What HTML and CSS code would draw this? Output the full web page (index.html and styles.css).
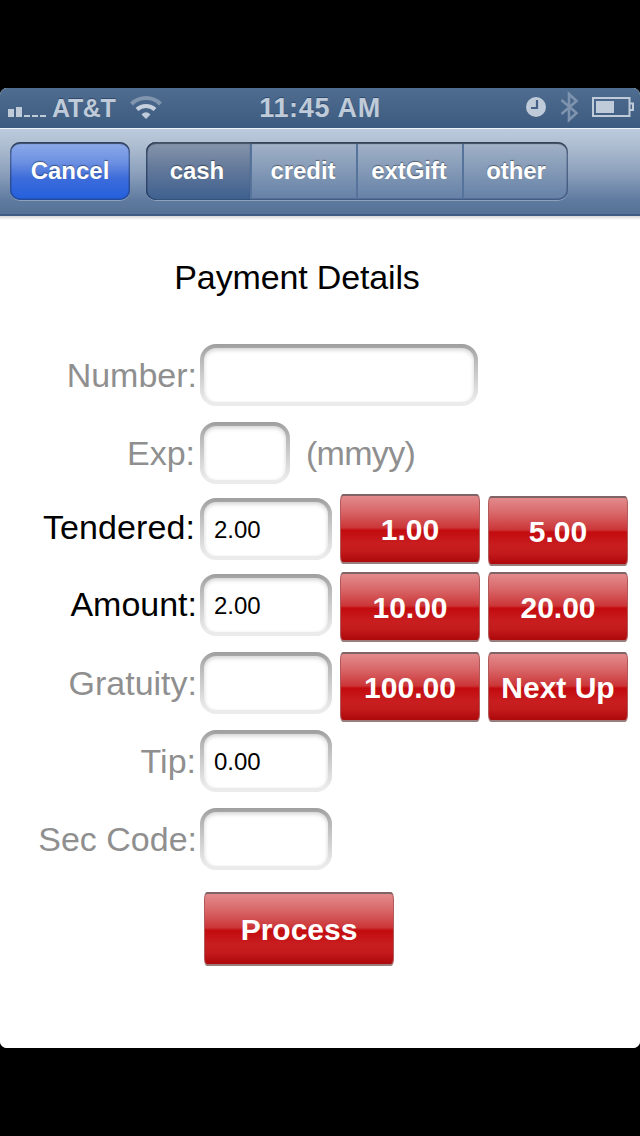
FILE: index.html
```html
<!DOCTYPE html>
<html lang="en">
<head>
<meta charset="utf-8">
<title>Payment Details</title>
<link rel="stylesheet" href="styles.css">
</head>
<body>
<div class="phone">
  <header class="status">
    <div class="status-left">
      <svg class="signal" width="40" height="40" viewBox="0 0 40 40"><path d="M8 21h6v8H8zM16 19h6v10h-6zM24 27h6v2h-6zM32 27h6v2h-6z"/></svg>
      <svg class="signal-tail" width="8" height="40" viewBox="0 0 8 40"><path d="M0 27h6v2H0z"/></svg>
      <span class="carrier">AT&amp;T</span>
      <svg class="wifi" width="32" height="40" viewBox="0 0 32 40">
        <path class="dim" d="M1.500 16A20.500 20.500 0 0 1 30.500 16" />
        <path class="arc" d="M7 21.500A13 13 0 0 1 25 21.500" />
        <path class="dot" d="M11.500 26.500Q16 22 20.500 26.500L16 31z" />
      </svg>
    </div>
    <div class="clock">11:45 AM</div>
    <div class="status-right">
      <svg width="120" height="40" viewBox="0 0 120 40">
        <circle class="face" cx="16" cy="19" r="10"/>
        <path class="hands" d="M17 12v8h-6"/>
        <path class="bt" d="M41.500 12l15 13-7.500 7V6l7.500 7-15 13"/>
        <rect class="cell" x="73" y="10" width="36.500" height="18"/>
        <path class="fill" d="M76 13h18v12H76zM110 14.500h4v8.500h-4v-2h2v-4.500h-2z"/>
      </svg>
    </div>
  </header>
  <nav class="toolbar">
    <div class="cancel">Cancel</div>
    <div class="segments">
      <div class="seg active">cash</div>
      <div class="seg">credit</div>
      <div class="seg">extGift</div>
      <div class="seg">other</div>
    </div>
  </nav>
  <main class="form">
    <h1 class="title">Payment Details</h1>
    <div class="row"><div class="label">Number:</div><div class="field wide"></div></div>
    <div class="row exp"><div class="label pull">Exp:</div><div class="field small"></div><div class="hint">(mmyy)</div></div>
    <div class="row tendered"><div class="label on pull">Tendered:</div><div class="field">2.00</div><div class="btn">1.00</div><div class="btn low">5.00</div></div>
    <div class="row amount"><div class="label on">Amount:</div><div class="field">2.00</div><div class="btn">10.00</div><div class="btn">20.00</div></div>
    <div class="row"><div class="label">Gratuity:</div><div class="field"></div><div class="btn">100.00</div><div class="btn">Next Up</div></div>
    <div class="row"><div class="label tip">Tip:</div><div class="field">0.00</div></div>
    <div class="row last"><div class="label">Sec Code:</div><div class="field"></div></div>
    <div class="btn process">Process</div>
  </main>
</div>
</body>
</html>
```
FILE: styles.css
```css
* { box-sizing: border-box; }
body { margin: 0; background: #000; font-family: "Liberation Sans", Arial, sans-serif; }
.phone { width: 640px; height: 960px; margin-top: 88px; background: #fff; border-radius: 7px; overflow: hidden; }

.status { display: grid; grid-template-columns: 200px 240px 200px; height: 40px; background: linear-gradient(#4f6d8f, #3d5a80); color: #bfcbd9; font-weight: bold; line-height: 40px; text-shadow: 0 -1px 0 #2f4a6c; }
.status svg { display: block; flex: none; fill: #bfcbd9; }
.status-left { display: flex; }
.signal-tail { margin-right: 4px; }
.carrier { width: 64px; font-size: 25px; letter-spacing: -0.3px; }
.wifi { margin-left: 14px; }
.wifi .dim { fill: none; stroke: #8195af; stroke-width: 4; }
.wifi .arc { fill: none; stroke: #c6d1dd; stroke-width: 4; }
.clock { font-size: 27px; letter-spacing: .7px; text-align: center; white-space: nowrap; }
.status-right { padding-left: 80px; }
.status .hands { fill: none; stroke: #45618a; stroke-width: 2.2; }
.status .bt { fill: none; stroke: #7e93ae; stroke-width: 2.6; }
.status .cell { fill: none; stroke: #bfcbd9; stroke-width: 2; }

.toolbar { display: flex; gap: 16px; height: 88px; padding: 13px 10px 0; background: linear-gradient(#bccade, #b1c0d3 16%, #8ea2be 50%, #5f7a9f 84%, #587398 97%); border-top: 1px solid #eef1f7; border-bottom: 2px solid #3f5c85; color: #fff; font-weight: bold; font-size: 24px; line-height: 58px; text-align: center; text-shadow: 0 -1.5px 1px rgba(0,0,0,.4); }
.cancel, .segments { height: 58px; border-radius: 10px; box-shadow: 0 1px 0 rgba(255,255,255,.3), inset 0 2px 1px rgba(25,35,45,.6), inset 0 0 0 1.5px rgba(35,55,100,.5); }
.cancel { width: 120px; background: linear-gradient(#8eabea, #6c90e2 35%, #3d6cda 62%, #225fdd); }
.segments { display: flex; width: 422px; background: linear-gradient(#a3b3c9, #8399b6 50%, #6480a6); }
.seg { width: 106px; border-left: 2px solid #56739c; padding-right: 2px; margin-top: 2px; height: 55px; line-height: 54px; letter-spacing: -.1px; }
.seg:last-child { padding-right: 0; }
.active { width: 104px; margin: 0; height: 58px; line-height: 58px; border: 0; border-radius: 10px 0 0 10px; background: linear-gradient(#8796ac, #64799a 45%, #3d6090); box-shadow: inset 0 2px 1px rgba(25,35,55,.6), inset 1.5px 0 0 rgba(35,55,90,.7), inset 0 -1px 0 #35527b; }

.form { height: 832px; background: linear-gradient(#d6d6d6, #fff 4px); padding-top: 41px; }
.title { width: 594px; margin: 0 0 47px; font-size: 34px; font-weight: normal; line-height: 40px; letter-spacing: -.15px; text-align: center; }
.row { display: flex; align-items: flex-start; height: 78px; }
.label { width: 200px; padding-right: 3px; text-align: right; font-size: 34px; line-height: 62px; color: #8f8f8f; white-space: nowrap; }
.label.on { color: #000; }
.label.pull { padding-right: 5px; }
.label.tip { padding-right: 4px; }
.field { width: 132px; height: 62px; border: 4px solid transparent; border-radius: 16px; padding-left: 10px; font-size: 24px; line-height: 55px; background: linear-gradient(#fff, #fff) padding-box, linear-gradient(#9f9f9f, #bdbdbd 30%, #ebebeb 92%) border-box; box-shadow: inset 0 2px 4px rgba(0,0,0,.18); }
.wide { width: 278px; }
.small { width: 90px; }
.hint { padding-left: 16px; font-size: 34px; line-height: 62px; letter-spacing: -.7px; color: #8f8f8f; }
.exp { height: 72px; }
.tendered .label { padding-top: 2px; letter-spacing: .1px; }
.tendered .field { margin-top: 4px; }
.amount { height: 80px; }
.amount .label { padding-top: 1px; }
.amount .field { margin-top: 2px; }
.btn { width: 140px; height: 70px; margin-left: 8px; border-radius: 3px / 8px; border: solid; border-color: #806465 #b05a5a #997c7c; border-width: 2px 1px; background: linear-gradient(#e38a8c, #d9696b 22%, #cc3638 48%, #c30b0e 52%, #c81e20 72%, #c31a1c 84%, #ad080a); color: #fff; font-size: 30px; font-weight: bold; line-height: 67px; text-align: center; white-space: nowrap; }
.low { margin-top: 2px; }
.last { height: 84px; }
.process { width: 190px; height: 74px; margin-left: 204px; line-height: 71px; }
```
